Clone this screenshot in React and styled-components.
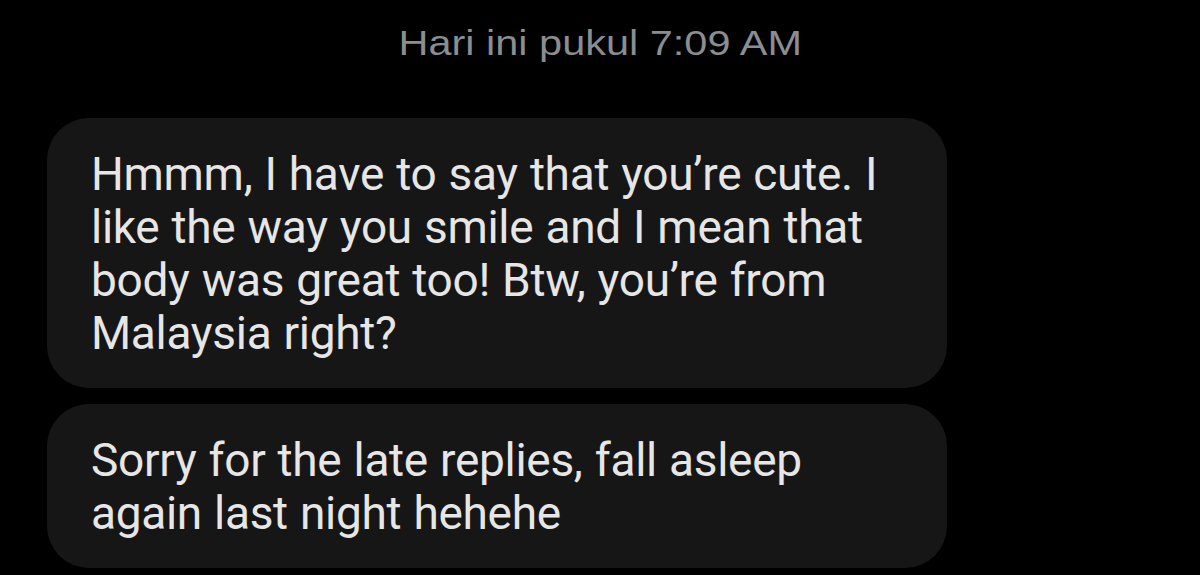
import React from "react";
import styled, { createGlobalStyle } from "styled-components";

const Global = createGlobalStyle`
  html, body { margin: 0; padding: 0; background: #000; }
  body { font-family: Roboto, "Noto Sans", sans-serif; }
`;

const Screen = styled.div`
  width: 1200px;
  height: 575px;
  background: #000;
  overflow: hidden;
  display: flex;
  flex-direction: column;
`;

const StampRow = styled.div`
  display: flex;
  justify-content: center;
  height: 118px;
  padding-top: 23px;
  box-sizing: border-box;
`;

const Stamp = styled.span`
  display: inline-block;
  color: #8a8d91;
  font-family: "Liberation Sans", Arial, sans-serif;
  font-size: 35px;
  line-height: 40px;
  transform: scaleX(1.185);
`;

const Thread = styled.div`
  display: flex;
  flex-direction: column;
  gap: 16px;
  padding-left: 47px;
`;

const Bubble = styled.div`
  width: 900px;
  box-sizing: border-box;
  background: #161616;
  border-radius: 42px;
  padding: 30px 40px 28px 44px;
  color: #e6e6e6;
  font-size: 46px;
  line-height: 53px;
  letter-spacing: -0.3px;
  word-spacing: 1px;
`;

export default function App() {
  return (
    <Screen>
      <Global />
      <StampRow>
        <Stamp>Hari ini pukul 7:09 AM</Stamp>
      </StampRow>
      <Thread>
        <Bubble>
          Hmmm, I have to say that you’re cute. I<br />
          like the way you smile and I mean that<br />
          body was great too! Btw, you’re from<br />
          Malaysia right?
        </Bubble>
        <Bubble>
          Sorry for the late replies, fall asleep<br />
          again last night hehehe
        </Bubble>
      </Thread>
    </Screen>
  );
}
